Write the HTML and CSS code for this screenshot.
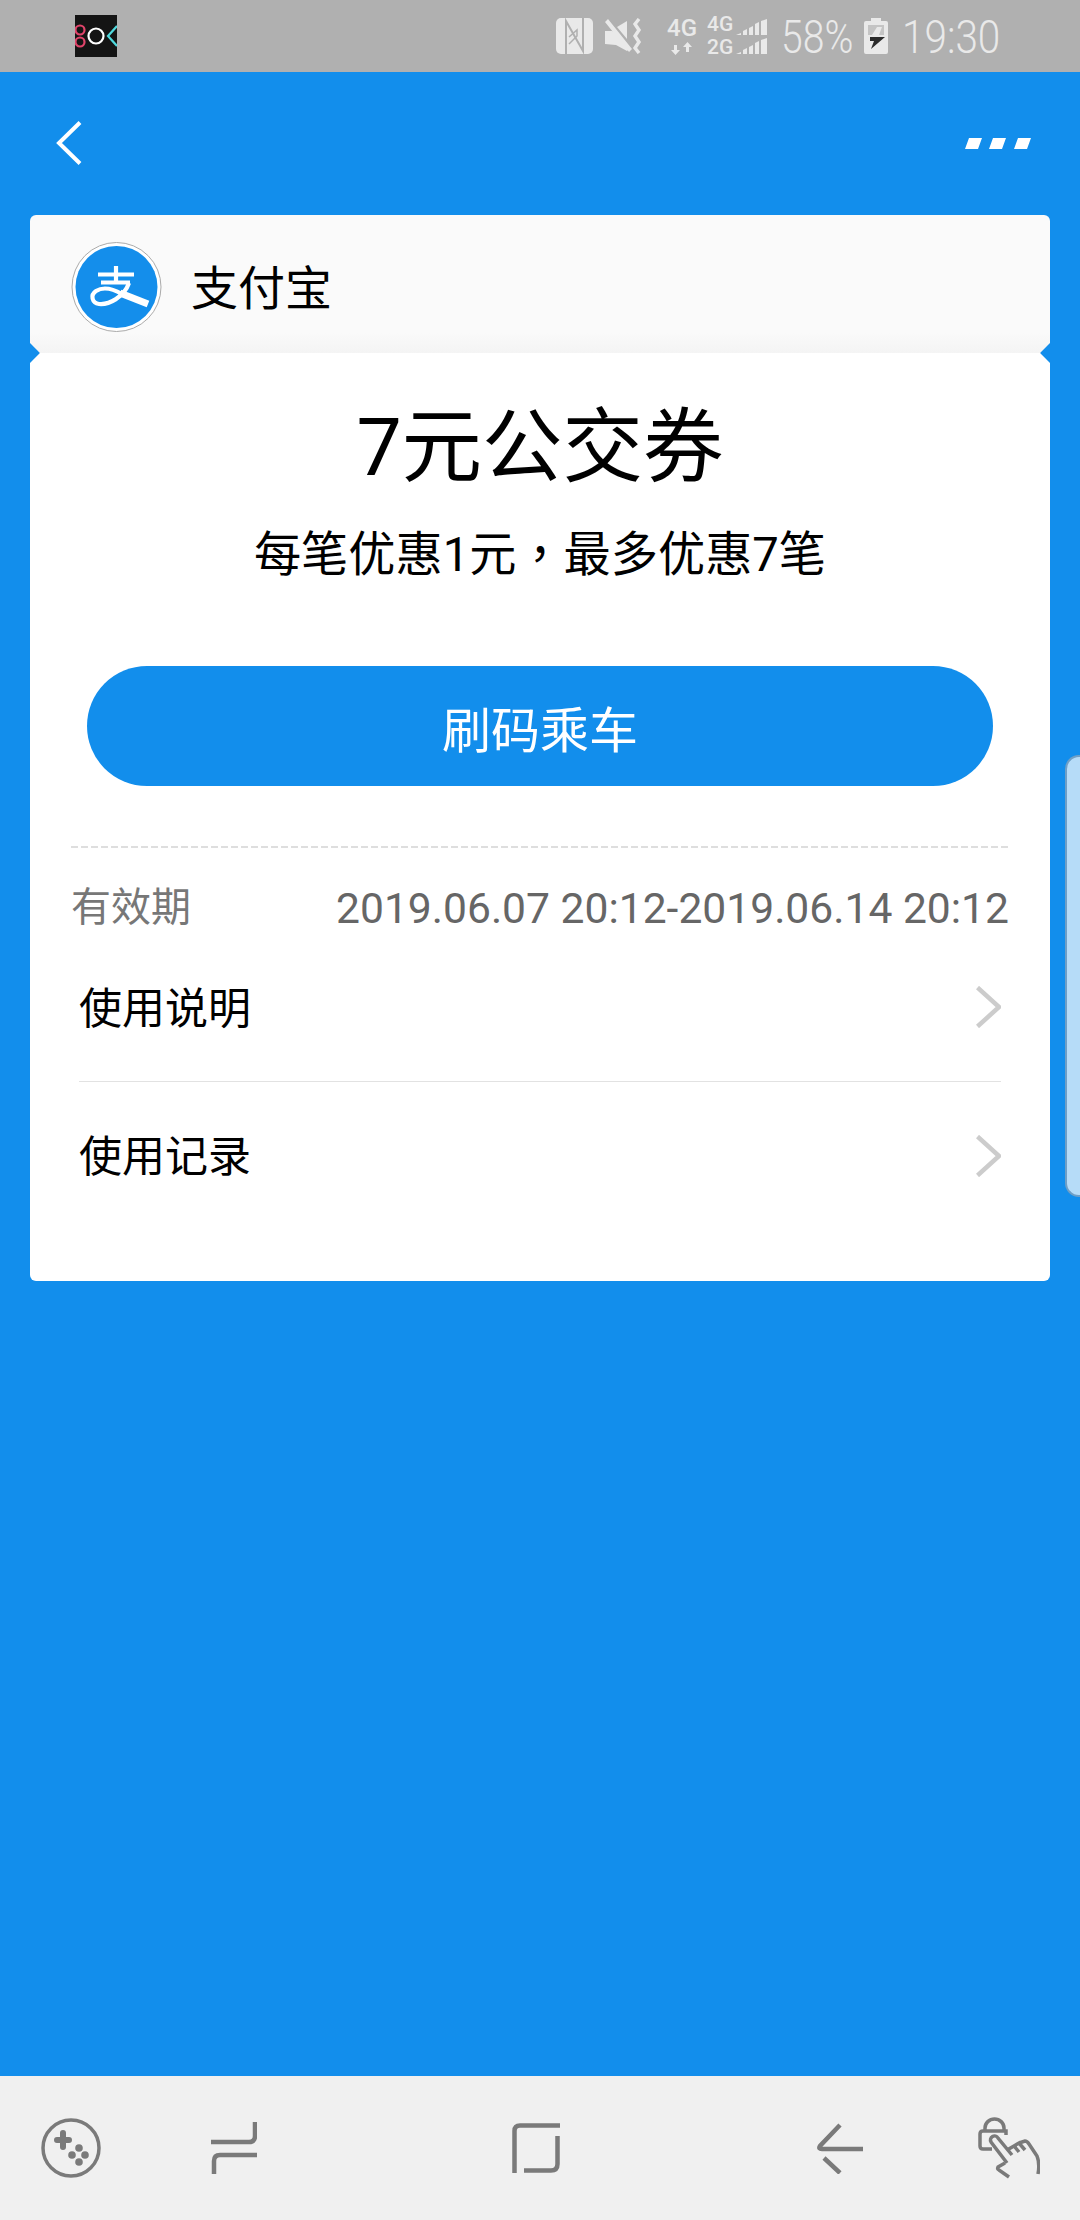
FILE: index.html
```html
<!DOCTYPE html>
<html lang="zh-CN">
<head>
    <meta charset="UTF-8">
    <meta name="viewport" content="width=device-width, initial-scale=1.0">
    <title>7元公交券</title>
    <link rel="stylesheet" href="styles.css">
</head>
<body>
    <div class="status-bar">
        <svg class="app-icon" viewBox="0 0 42 42">
            <rect width="42" height="42" fill="#141414"/>
            <circle cx="5" cy="15" r="4.5" fill="none" stroke="#e0446a" stroke-width="2.2"/>
            <circle cx="5" cy="27" r="4.5" fill="none" stroke="#e0446a" stroke-width="2.2"/>
            <circle cx="21" cy="21" r="7.5" fill="none" stroke="#fff" stroke-width="2.2"/>
            <path d="M42 11 L33 21 L42 31" fill="none" stroke="#4fd8dc" stroke-width="2.2"/>
        </svg>
        <div class="status-right">
            <svg class="ic-nfc" viewBox="0 0 37 36">
                <rect width="37" height="36" rx="5" fill="#e9e9e9"/>
                <path fill="none" stroke="#b0b0b0" stroke-width="2" d="M10 36V3L27 33V0"/>
                <path fill="none" stroke="#b0b0b0" stroke-width="1.500" d="M13 19L21 12V18L13 26"/>
            </svg>
            <svg class="ic-mute" viewBox="0 0 38 36">
                <path fill="#e9e9e9" d="M0 13h7l3 3 14 15-2 2-11-6-11-1zM12 9l10-6v18zM3 1l24 30-3 3L0 4z"/>
                <path fill="none" stroke="#e9e9e9" stroke-width="3.4" d="M34 1l-4 5 4 6-4 6 4 6-4 6 4 5"/>
            </svg>
            <div class="net">
                <span class="net-label">4G</span>
                <svg class="ic-arrows" viewBox="0 0 22 13">
                    <path fill="#e9e9e9" d="M3 3h3v5h3l-4.500 5L0 8h3zM15 10h3V5h3l-4.500-5L12 5h3z"/>
                </svg>
            </div>
            <div class="signal">
                <div class="signal-labels">
                    <span>4G</span>
                    <span>2G</span>
                </div>
                <div class="signal-bars">
                    <svg class="ic-bars" viewBox="0 0 31 16">
                        <path fill="#e9e9e9" d="M0 16l5-2v2zM7 16v-4l4-2v6zM13 16V9l4-2v9zM19 16V5l4-2v13zM25 16V2l6-2v16z"/>
                    </svg>
                    <svg class="ic-bars" viewBox="0 0 31 16">
                        <path fill="#e9e9e9" d="M0 16l5-2v2zM7 16v-4l4-2v6zM13 16V9l4-2v9zM19 16V5l4-2v13zM25 16V2l6-2v16z"/>
                    </svg>
                </div>
            </div>
            <div class="status-pct"><span>58%</span></div>
            <svg class="ic-battery" viewBox="0 0 24 36">
                <path fill="#e9e9e9" d="M7 0h10v3h5a2 2 0 0 1 2 2v29a2 2 0 0 1-2 2H2a2 2 0 0 1-2-2V5a2 2 0 0 1 2-2h5z"/>
                <path fill="#c4c4c4" d="M4 7h16v10H4z"/>
                <path fill="#e9e9e9" d="M13 9h5l-3 8h-7z"/>
                <path fill="#2b2b2b" d="M6 19h15L7 31l3-8H6z"/>
            </svg>
            <div class="status-time"><span>19:30</span></div>
        </div>
    </div>

    <div class="main">
        <div class="top-bar">
            <svg class="ic-back" viewBox="0 0 26 44">
                <path fill="none" stroke="#fff" stroke-width="4" d="M24 1.500 L3 22 L24 42.500"/>
            </svg>
            <svg class="ic-more" viewBox="0 0 66 11">
                <path fill="#fff" d="M4 0h13l-4 11H0zM28 0h13l-4 11H24zM53 0h13l-4 11H49z"/>
            </svg>
        </div>

        <div class="card">
            <div class="card-head">
                <svg class="logo" viewBox="0 0 105 105">
                    <circle cx="51.500" cy="52" r="44.500" fill="#fff" stroke="#aaa" stroke-width="1"/>
                    <circle cx="51.500" cy="52" r="41" fill="#148eeb"/>
                    <g fill="none" stroke="#fff" stroke-width="4.200">
                        <path d="M33 39.500H69M51 31V47M36 47.500H65"/>
                        <path d="M64 48C59 62 44 70 34 69C27 68 25 60 31 56C39 51 50 55 57 59"/>
                        <path stroke-width="7" d="M55 58L83 69"/>
                    </g>
                </svg>
                <span class="brand">支付宝</span>
            </div>
            <div class="card-body">
                <div class="coupon-title">7元公交券</div>
                <div class="coupon-sub">每笔优惠1元<span class="punct" lang="zh-TW">，</span>最多优惠7笔</div>
                <button class="ride-btn">刷码乘车</button>
                <div class="dashed"></div>
                <div class="valid-row">
                    <span class="valid-label">有效期</span>
                    <span class="valid-date">2019.06.07 20:12-2019.06.14 20:12</span>
                </div>
                <div class="list">
                    <div class="list-row">
                        <span class="list-text">使用说明</span>
                        <svg class="ic-chevron" viewBox="0 0 25 42">
                            <path fill="none" stroke="#ccc" stroke-width="4.500" d="M1.500 1.500 L23 21 L1.500 40.500"/>
                        </svg>
                    </div>
                    <div class="list-row">
                        <span class="list-text">使用记录</span>
                        <svg class="ic-chevron" viewBox="0 0 25 42">
                            <path fill="none" stroke="#ccc" stroke-width="4.500" d="M1.500 1.500 L23 21 L1.500 40.500"/>
                        </svg>
                    </div>
                </div>
            </div>
        </div>
    </div>

    <div class="side-tab"></div>

    <div class="nav-bar">
        <svg class="nav-game" viewBox="0 0 60 60">
            <circle cx="30" cy="30" r="28" fill="none" stroke="#7a7a7a" stroke-width="3.500"/>
            <path fill="none" stroke="#7a7a7a" stroke-width="6" stroke-linecap="round" d="M16 22H28M22 15V29"/>
            <g fill="#7a7a7a">
                <circle cx="38" cy="30" r="3.800"/>
                <circle cx="31" cy="37" r="3.800"/>
                <circle cx="44" cy="37" r="3.800"/>
                <circle cx="38" cy="44" r="3.800"/>
            </g>
        </svg>
        <svg class="nav-recent" viewBox="0 0 46 52">
            <path fill="none" stroke="#7a7a7a" stroke-width="4.500" d="M44 0V14Q44 20 38 20H0M46 33H9Q3 33 3 39V52"/>
        </svg>
        <svg class="nav-home" viewBox="0 0 48 50">
            <path fill="none" stroke="#7a7a7a" stroke-width="4.500" d="M48 2.500H8Q2.500 2.500 2.500 8V50M45.500 13V41Q45.500 47.500 39 47.500H12"/>
        </svg>
        <svg class="nav-back" viewBox="0 0 47 51">
            <path fill="none" stroke="#7a7a7a" stroke-width="4.500" d="M24 2L4 23Q2 26 6 26H47M8 35L24 50"/>
        </svg>
        <svg class="nav-lock" viewBox="0 0 62 62">
            <g fill="none" stroke="#7a7a7a" stroke-width="3.500">
                <path d="M14 32H5Q2 32 2 29V17Q2 14 5 14H28V18M7 14V11A9.500 9 0 0 1 26 11V14"/>
                <path d="M29 46L13 25A4 4 0 0 1 20 21L34 38"/>
                <path d="M29 33L36 29L41 35M36 29L41 26L47 33M41 26L47 24Q49 24 51 27L59 39Q62 47 60 57"/>
                <path d="M27 46L20 50Q19 52 21 53L31 60"/>
            </g>
        </svg>
    </div>
</body>
</html>
```

FILE: styles.css
```css
* {
    box-sizing: border-box;
}
html, body {
    margin: 0;
    padding: 0;
}
body {
    width: 1080px;
    height: 2220px;
    position: relative;
    overflow: hidden;
    display: flex;
    flex-direction: column;
    background-color: #128eec;
    font-family: Roboto, "Noto Sans CJK SC", sans-serif;
    color: #000;
}
svg {
    display: block;
    flex: none;
}

/* status bar */
.status-bar {
    height: 72px;
    flex: none;
    display: flex;
    align-items: center;
    justify-content: space-between;
    padding: 0 83px 0 75px;
    background-color: #b0b0b0;
}
.app-icon {
    width: 42px;
    height: 42px;
}
.status-right {
    display: flex;
    align-items: center;
    color: #e9e9e9;
}
.ic-nfc {
    width: 37px;
    height: 36px;
}
.ic-mute {
    width: 38px;
    height: 36px;
    margin-left: 12px;
}
.net {
    width: 30px;
    margin-left: 24px;
    display: flex;
    flex-direction: column;
    align-items: center;
}
.net-label {
    font-size: 24px;
    font-weight: 500;
    line-height: 20px;
}
.ic-arrows {
    width: 24px;
    height: 13px;
    margin-top: 4px;
}
.signal {
    width: 60px;
    margin-left: 10px;
    display: flex;
    align-items: center;
    justify-content: space-between;
}
.signal-labels {
    display: flex;
    flex-direction: column;
    font-size: 21px;
    font-weight: 500;
    line-height: 23.5px;
}
.signal-bars {
    display: flex;
    flex-direction: column;
    gap: 3px;
}
.ic-bars {
    width: 31px;
    height: 16px;
}
.status-pct, .status-time {
    padding-top: 2px;
    font-size: 46px;
    font-weight: 300;
    line-height: 46px;
    white-space: nowrap;
}
.status-pct span, .status-time span {
    display: inline-block;
    transform-origin: left center;
}
.status-pct span {
    transform: scaleX(0.85);
}
.status-time span {
    transform: scaleX(0.88);
}
.status-pct {
    width: 70px;
    margin-left: 14px;
}
.ic-battery {
    width: 24px;
    height: 36px;
    margin-left: 13px;
}
.status-time {
    width: 95px;
    margin-left: 14px;
}

/* top bar */
.main {
    flex: 1;
    padding: 0 30px;
}
.top-bar {
    height: 143px;
    display: flex;
    align-items: center;
    justify-content: space-between;
    padding: 0 19px 0 26px;
}
.ic-back {
    width: 26px;
    height: 44px;
    margin-top: -1px;
}
.ic-more {
    width: 66px;
    height: 11px;
    margin-top: -1px;
}

/* card */
.card {
    position: relative;
    border-radius: 6px;
    overflow: hidden;
}
.card::before, .card::after {
    content: "";
    position: absolute;
    top: 131px;
    width: 14px;
    height: 14px;
    background-color: #128eec;
    transform: rotate(45deg);
    z-index: 1;
}
.card::before {
    left: -7px;
}
.card::after {
    right: -7px;
}
.card-head {
    height: 138px;
    display: flex;
    align-items: center;
    padding: 6px 0 0 35px;
    background: linear-gradient(#fafafa 85%, #f4f4f4);
}
.logo {
    width: 105px;
    height: 105px;
}
.brand {
    margin: 3px 0 0 21px;
    font-size: 47px;
    line-height: 60px;
}
.card-body {
    padding: 55px 0 52px;
    background-color: #fff;
}
.coupon-title {
    font-size: 80.5px;
    line-height: 80px;
    text-align: center;
}
.coupon-sub {
    margin-top: 37px;
    font-size: 47.2px;
    line-height: 60px;
    text-align: center;
}
.punct {
    font-family: "Noto Sans CJK TC", sans-serif;
    line-height: 0;
}
.ride-btn {
    display: block;
    width: 906px;
    height: 120px;
    margin: 81px auto 0;
    padding: 0;
    border: none;
    border-radius: 60px;
    background-color: #128eec;
    color: #fff;
    font-family: inherit;
    font-size: 49px;
}
.dashed {
    height: 2px;
    margin: 60px 41px 0;
    background: repeating-linear-gradient(90deg, #dedede 0 7px, transparent 7px 10px);
}
.valid-row {
    display: flex;
    align-items: center;
    justify-content: space-between;
    height: 50px;
    margin: 35px 41px 0;
}
.valid-label {
    font-size: 40px;
    line-height: 46px;
    color: #777;
}
.valid-date {
    font-size: 42.6px;
    line-height: 50px;
    color: #666;
}
.list {
    margin: 0 49px;
}
.list-row {
    display: flex;
    align-items: center;
    justify-content: space-between;
    height: 148px;
    font-size: 43px;
}
.list-row + .list-row {
    border-top: 1px solid #e2e2e2;
}
.list-text {
    margin-bottom: 5px;
}
.ic-chevron {
    width: 25px;
    height: 42px;
}

/* edge panel handle */
.side-tab {
    position: absolute;
    top: 755px;
    right: 0;
    width: 15px;
    height: 442px;
    border: 2px solid #6f9fc6;
    border-right: none;
    border-radius: 14px 0 0 14px;
    background-color: #b6dcf8;
}

/* navigation bar */
.nav-bar {
    height: 144px;
    flex: none;
    display: flex;
    align-items: center;
    padding-left: 41px;
    background-color: #f0f0f0;
}
.nav-game {
    width: 60px;
    height: 60px;
}
.nav-recent {
    width: 46px;
    height: 52px;
    margin-left: 110px;
}
.nav-home {
    width: 48px;
    height: 50px;
    margin-left: 255px;
}
.nav-back {
    width: 47px;
    height: 51px;
    margin-left: 256px;
}
.nav-lock {
    width: 62px;
    height: 62px;
    margin-left: 115px;
}
```
